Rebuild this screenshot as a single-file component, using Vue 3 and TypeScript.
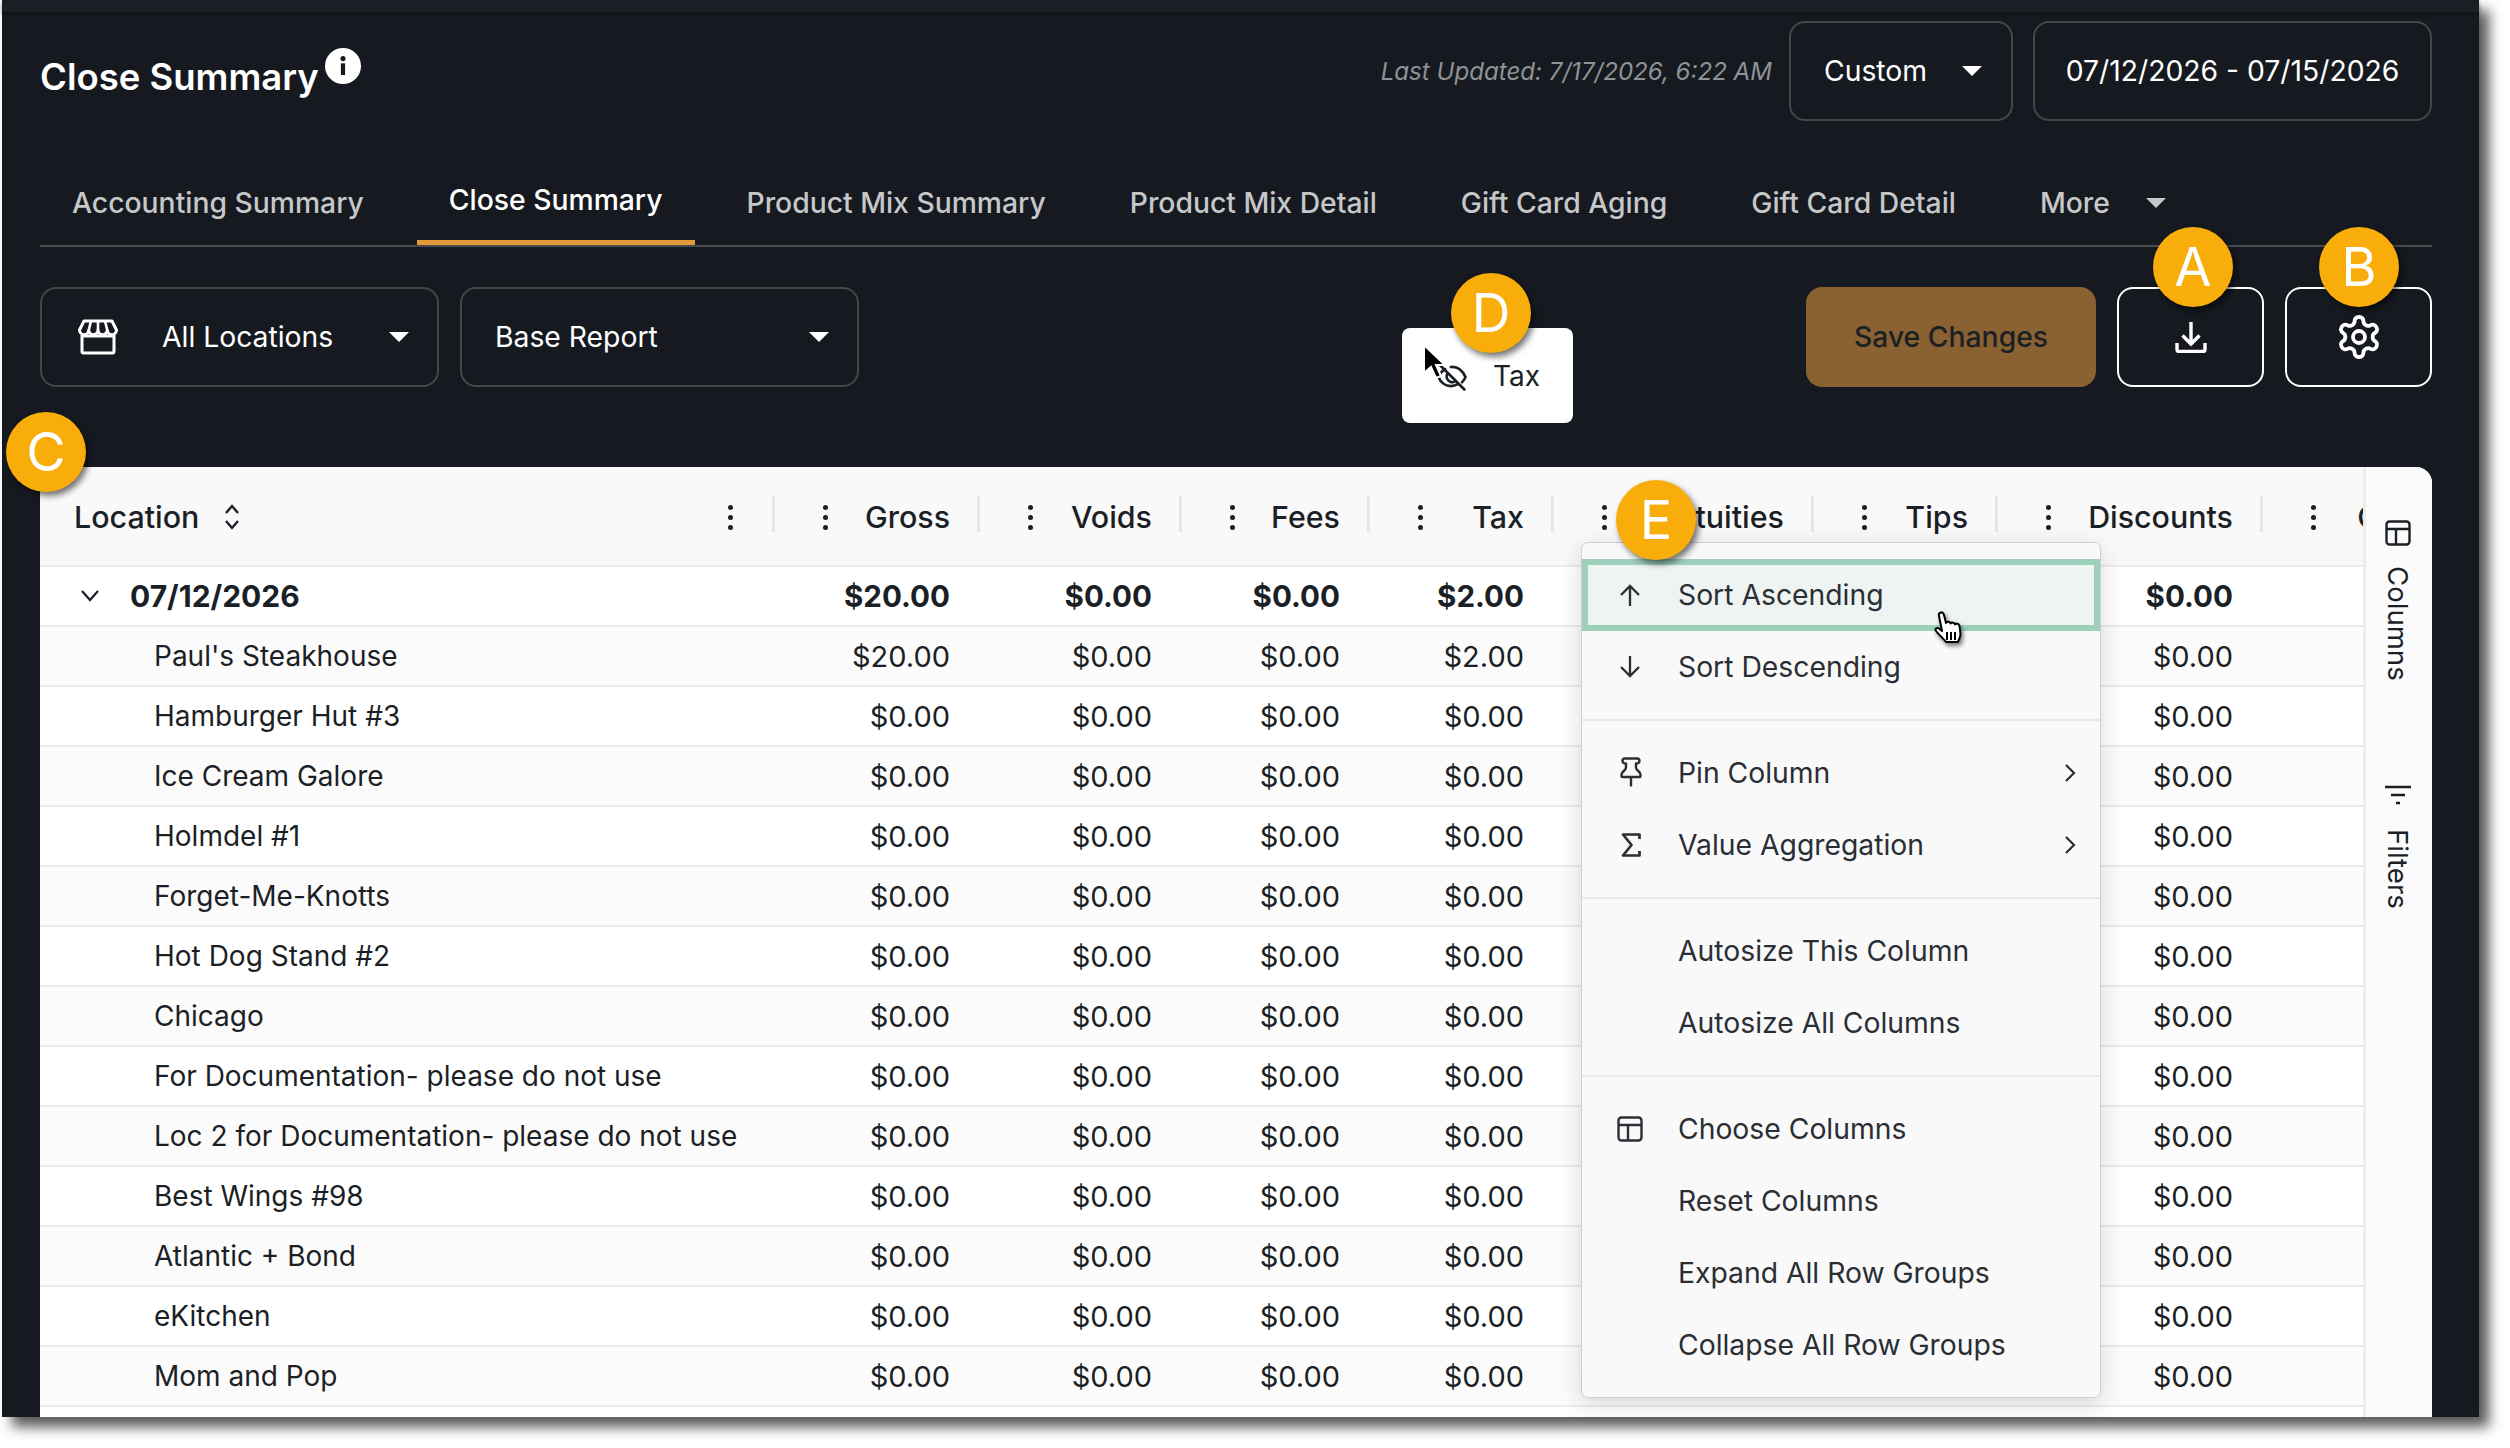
<script setup lang="ts">
// Close Summary report page: dark header, grouped table, open column menu, callout badges.
interface Row {
  name: string;
  gross?: string;
  tax?: string;
}

const tabs = [
  'Accounting Summary',
  'Close Summary',
  'Product Mix Summary',
  'Product Mix Detail',
  'Gift Card Aging',
  'Gift Card Detail',
];

const columns = ['Gross', 'Voids', 'Fees', 'Tax', 'Gratuities', 'Tips', 'Discounts', 'Comps'];

const rows: Row[] = [
  { name: "Paul's Steakhouse", gross: '$20.00', tax: '$2.00' },
  { name: 'Hamburger Hut #3' },
  { name: 'Ice Cream Galore' },
  { name: 'Holmdel #1' },
  { name: 'Forget-Me-Knotts' },
  { name: 'Hot Dog Stand #2' },
  { name: 'Chicago' },
  { name: 'For Documentation- please do not use' },
  { name: 'Loc 2 for Documentation- please do not use' },
  { name: 'Best Wings #98' },
  { name: 'Atlantic + Bond' },
  { name: 'eKitchen' },
  { name: 'Mom and Pop' },
];

// gratuities and tips sit behind the open menu, last column is past the clip
function amounts(r: { gross?: string; tax?: string }): string[] {
  const zero = '$0.00';
  return [r.gross ?? zero, zero, zero, r.tax ?? zero, '', '', zero, ''];
}
const groupAmounts = amounts({ gross: '$20.00', tax: '$2.00' });
const badges = [
  { letter: 'A', cls: 'badge-a' },
  { letter: 'B', cls: 'badge-b' },
  { letter: 'C', cls: 'badge-c' },
  { letter: 'D', cls: 'badge-d' },
  { letter: 'E', cls: 'badge-e' },
];
</script>

<template>
  <div class="page">
    <div class="panel">
      <div class="strip"></div>

      <header class="head">
        <h1 class="title">Close Summary</h1>
        <svg class="info" viewBox="0 0 34 34">
          <circle cx="17" cy="17" r="17" fill="#fff" />
          <circle cx="17" cy="10" r="2.400" fill="#161a20" />
          <rect x="15" y="14.500" width="4" height="11" fill="#161a20" />
        </svg>
        <span class="updated">Last Updated: 7/17/2026, 6:22 AM</span>
        <div class="box box-custom">Custom <i class="caret"></i></div>
        <div class="box box-date">07/12/2026 - 07/15/2026</div>
      </header>

      <nav class="tabs">
        <div v-for="t in tabs" :key="t" class="tab" :class="{ active: t === 'Close Summary' }">{{ t }}</div>
        <div class="tab">More <i class="caret caret-more"></i></div>
      </nav>

      <div class="tools">
        <div class="box box-select">
          <svg class="store" viewBox="0 0 40 36" fill="none" stroke="#fff" stroke-width="3" stroke-linejoin="round">
            <path d="M6 2h28l4.500 9a4.625 4.625 0 0 1-9.250 0 4.625 4.625 0 0 1-9.250 0 4.625 4.625 0 0 1-9.250 0 4.625 4.625 0 0 1-9.250 0z" />
            <path d="M29.250 11 27 2M20 11V2M10.750 11 13 2" stroke-width="2.600" />
            <path d="M4 16v16.500a1.500 1.500 0 0 0 1.500 1.500h29a1.500 1.500 0 0 0 1.500-1.500V16M4 17h32" />
          </svg>
          <span class="select-label">All Locations</span>
          <i class="caret"></i>
        </div>
        <div class="box box-select box-report">
          <span class="select-label">Base Report</span>
          <i class="caret"></i>
        </div>
        <button class="save">Save Changes</button>
        <button class="icon-btn">
          <svg class="dl" viewBox="0 0 32 32" fill="none" stroke="#fff" stroke-width="3.400">
            <path d="M16 1v22M7.500 14.500 16 23l8.500-8.500" />
            <path d="M2 22v6.500a2 2 0 0 0 2 2h24a2 2 0 0 0 2-2V22" />
          </svg>
        </button>
        <button class="icon-btn">
          <svg class="gear" viewBox="0 0 24 24" fill="none" stroke="#fff" stroke-width="1.900" stroke-linejoin="round">
            <path d="M12.220 2h-.44a2 2 0 0 0-2 2v.18a2 2 0 0 1-1 1.730l-.43.25a2 2 0 0 1-2 0l-.15-.08a2 2 0 0 0-2.730.73l-.22.38a2 2 0 0 0 .73 2.730l.15.1a2 2 0 0 1 1 1.720v.51a2 2 0 0 1-1 1.740l-.15.09a2 2 0 0 0-.73 2.730l.22.38a2 2 0 0 0 2.730.73l.15-.08a2 2 0 0 1 2 0l.43.25a2 2 0 0 1 1 1.730V20a2 2 0 0 0 2 2h.44a2 2 0 0 0 2-2v-.18a2 2 0 0 1 1-1.730l.43-.25a2 2 0 0 1 2 0l.15.08a2 2 0 0 0 2.730-.73l.22-.39a2 2 0 0 0-.73-2.730l-.15-.08a2 2 0 0 1-1-1.740v-.5a2 2 0 0 1 1-1.740l.15-.09a2 2 0 0 0 .73-2.730l-.22-.38a2 2 0 0 0-2.730-.73l-.15.08a2 2 0 0 1-2 0l-.43-.25a2 2 0 0 1-1-1.730V4a2 2 0 0 0-2-2z" />
            <circle cx="12" cy="12" r="3" />
          </svg>
        </button>
      </div>

      <section class="table-card">
        <div class="grid-wrap">
          <div class="row row-head">
            <div class="cell head-loc">
              <span>Location</span>
              <svg class="sort" viewBox="0 0 20 28" fill="none" stroke="#1b1f26" stroke-width="2.400">
                <path d="M4 10l6-7 6 7M4 18l6 7 6-7" />
              </svg>
              <span class="kebab kebab-end"><i></i><i></i><i></i></span>
            </div>
            <div v-for="c in columns" :key="c" class="cell head-col">
              <span class="kebab"><i></i><i></i><i></i></span>
              <span>{{ c }}</span>
            </div>
          </div>

          <div class="row row-group">
            <div class="cell cell-loc">
              <svg class="chev" viewBox="0 0 20 14" fill="none" stroke="#1b1f26" stroke-width="2.200">
                <path d="M2 2l8 9 8-9" />
              </svg>
              07/12/2026
            </div>
            <div v-for="(a, i) in groupAmounts" :key="i" class="cell cell-num">{{ a }}</div>
          </div>

          <div v-for="(r, i) in rows" :key="r.name" class="row" :class="{ alt: i % 2 === 0 }">
            <div class="cell cell-name">{{ r.name }}</div>
            <div v-for="(a, j) in amounts(r)" :key="j" class="cell cell-num">{{ a }}</div>
          </div>
        </div>

        <aside class="side">
          <div class="side-item">
            <svg class="side-icon" viewBox="0 0 26 26" fill="none" stroke="#1b1f26" stroke-width="2.400">
              <rect x="1.500" y="1.500" width="23" height="23" rx="3" />
              <path d="M1.500 9h23M11 9v15.500" />
            </svg>
            <span>Columns</span>
          </div>
          <div class="side-item side-filters">
            <svg class="side-icon" viewBox="0 0 26 20" fill="none" stroke="#1b1f26" stroke-width="2.600">
              <path d="M0 2h26M6 10h14M11 18h4" />
            </svg>
            <span>Filters</span>
          </div>
        </aside>
      </section>
    </div>

    <!-- dragged column ghost -->
    <div class="ghost">
      <svg class="ghost-eye" viewBox="0 0 32 32" fill="none" stroke="#1b1f26" stroke-width="2.400" stroke-linecap="round">
        <path d="M3 4l24 24M10 10c-3 1.500-5 4-6 7 2 5 6.500 8 11 8 2.500 0 4.500-.7 6.500-2M15 8c5-.5 10 2.500 13 9-.7 1.800-1.800 3.200-3 4.500" />
        <path d="M12 14a5 5 0 0 0 6.500 7" />
      </svg>
      <span>Tax</span>
    </div>
    <svg class="arrow-cursor" viewBox="0 0 24 36">
      <path d="M2 1v28l7-6 5 11 5-2-5-11h9z" fill="#000" stroke="#fff" stroke-width="2" />
    </svg>

    <!-- column menu -->
    <div class="menu">
      <div class="menu-item hover">
        <svg class="m-icon m-arrow" viewBox="0 0 24 24" fill="none" stroke="#2a2e35" stroke-width="2.300"><path d="M12 23V3M3 12l9-9 9 9" /></svg>
        Sort Ascending
      </div>
      <div class="menu-item">
        <svg class="m-icon m-arrow" viewBox="0 0 24 24" fill="none" stroke="#2a2e35" stroke-width="2.300"><path d="M12 1v20M3 12l9 9 9-9" /></svg>
        Sort Descending
      </div>
      <div class="menu-sep"></div>
      <div class="menu-item">
        <svg class="m-icon m-pin" viewBox="0 0 22 30" fill="none" stroke="#2a2e35" stroke-width="2.400" stroke-linejoin="round">
          <path d="M5 1.500h12a2.500 2.500 0 0 1 0 5h-1v4c0 3 4.500 4 4.500 7v1.500a1 1 0 0 1-1 1H2.500a1 1 0 0 1-1-1v-1.500c0-3 4.500-4 4.500-7v-4H5a2.500 2.500 0 0 1 0-5zM11 21v8.500" />
        </svg>
        Pin Column
        <svg class="m-next" viewBox="0 0 12 20" fill="none" stroke="#2a2e35" stroke-width="2.200"><path d="M2 2l8 8-8 8" /></svg>
      </div>
      <div class="menu-item">
        <svg class="m-icon m-sigma" viewBox="0 0 20 24" fill="none" stroke="#2a2e35" stroke-width="2.700" stroke-linejoin="round"><path d="M18.500 6V1.500H2l8.500 10.500L2 22.500h16.500V18" /></svg>
        Value Aggregation
        <svg class="m-next" viewBox="0 0 12 20" fill="none" stroke="#2a2e35" stroke-width="2.200"><path d="M2 2l8 8-8 8" /></svg>
      </div>
      <div class="menu-sep"></div>
      <div class="menu-item">Autosize This Column</div>
      <div class="menu-item">Autosize All Columns</div>
      <div class="menu-sep"></div>
      <div class="menu-item">
        <svg class="m-icon m-cols" viewBox="0 0 26 26" fill="none" stroke="#2a2e35" stroke-width="2.400">
          <rect x="1.500" y="1.500" width="23" height="23" rx="3" />
          <path d="M1.500 9h23M11 9v15.500" />
        </svg>
        Choose Columns
      </div>
      <div class="menu-item">Reset Columns</div>
      <div class="menu-item">Expand All Row Groups</div>
      <div class="menu-item">Collapse All Row Groups</div>
    </div>

    <svg class="hand-cursor" viewBox="0 0 30 34">
      <path d="M6 2c2-1.500 3.500 0 4 2l2 8c1-2 4-1.500 4.500.5 1-1.500 4-1 4.500 1 1-1.500 4-1 4.500 1.500l1 8c0 3-1.500 5-2.500 8H12c-2-3-7-7-10-11-1.500-2 .5-4 3-2.500l3 2.500L5 5c-.5-1.500 0-2.500 1-3z" fill="#fff" stroke="#000" stroke-width="2" stroke-linejoin="round" />
      <path d="M13 21v8M17 21v8M21 21v8" stroke="#000" stroke-width="2" />
    </svg>

    <div v-for="b in badges" :key="b.letter" class="badge" :class="b.cls">{{ b.letter }}</div>
  </div>
</template>

<style>
html,
body {
  margin: 0;
  background: #fff;
}
</style>

<style scoped>
.page {
  position: relative;
  width: 2510px;
  height: 1448px;
  overflow: hidden;
  font-family: Inter, 'Liberation Sans', sans-serif;
  font-size: 28.3px;
  color: #1b1f26;
}
.panel {
  margin-left: 2px;
  width: 2477px;
  height: 1417px;
  background: #161a20;
  box-shadow: 10px 10px 12px rgba(0, 0, 0, 0.65);
  padding: 0 47px 0 38px;
  box-sizing: border-box;
  display: flex;
  flex-direction: column;
}
.strip {
  height: 12px;
  margin: 0 -47px 0 -38px;
  background: #1a1e25;
  box-shadow: 0 2px 4px rgba(0, 0, 0, 0.4);
  flex: none;
}
.head {
  margin-top: 9px;
  height: 100px;
  display: flex;
  align-items: center;
  color: #fff;
  flex: none;
}
.title {
  font-size: 36.5px;
  font-weight: 600;
  margin: 12px 0 0;
}
.info {
  width: 36px;
  height: 36px;
  margin: -10px 0 0 6px;
}
.updated {
  margin-left: auto;
  font-size: 24.1px;
  font-style: italic;
  color: #8f9297;
  margin-right: 17px;
}
.box {
  box-sizing: border-box;
  height: 100px;
  border: 2px solid #44474c;
  border-radius: 16px;
  display: flex;
  align-items: center;
  color: #fff;
}
.box-custom {
  width: 224px;
  padding-left: 33px;
  justify-content: flex-start;
  gap: 35px;
}
.box-date {
  width: 399px;
  margin-left: 20px;
  justify-content: center;
}
.caret {
  width: 0;
  height: 0;
  border-left: 10px solid transparent;
  border-right: 10px solid transparent;
  border-top: 10px solid currentColor;
  display: inline-block;
}
.tabs {
  margin-top: 30px;
  height: 96px;
  box-sizing: border-box;
  border-bottom: 2px solid #484b50;
  display: flex;
  gap: 20px;
  flex: none;
}
.tab {
  padding: 9px 32px 0;
  height: 94px;
  box-sizing: border-box;
  display: flex;
  align-items: center;
  font-weight: 500;
  color: #c6c7c9;
}
.tab:first-child {
  margin-right: 1px;
}
.tab.active {
  color: #fff;
  border-bottom: 5px solid #e3983a;
}
.caret-more {
  margin-left: 36px;
  color: #c6c7c9;
}
.tools {
  margin-top: 40px;
  height: 100px;
  display: flex;
  gap: 21px;
  flex: none;
}
.box-select {
  width: 399px;
  padding: 0 28px 0 33px;
}
.store {
  width: 40px;
  height: 36px;
  flex: none;
  margin: 0 44px 0 3px;
}
.select-label {
  flex: 1;
}
.save {
  margin-left: auto;
  width: 290px;
  height: 100px;
  border: 0;
  border-radius: 16px;
  background: #8a6130;
  color: #1b1f26;
  font: 500 28.3px Inter, sans-serif;
}
.icon-btn {
  width: 147px;
  height: 100px;
  background: transparent;
  border: 2px solid #fff;
  border-radius: 16px;
  display: flex;
  align-items: center;
  justify-content: center;
  padding: 0;
}
.dl {
  width: 32px;
  height: 32px;
}
.gear {
  width: 48px;
  height: 48px;
}
.table-card {
  margin-top: 80px;
  flex: 1;
  min-height: 0;
  background: #fff;
  border-radius: 16px 16px 0 0;
  overflow: hidden;
  display: flex;
}
.grid-wrap {
  width: 2323px;
  flex: none;
  overflow: hidden;
}
.row {
  display: grid;
  grid-template-columns: 735px 205px 202px 188px 184px 260px 184px 265px 227px;
  width: 2450px;
  height: 60px;
  box-sizing: border-box;
  border-bottom: 2px solid #ececec;
  background: #fff;
  align-items: center;
  font-size: 28px;
}
.row.alt {
  background: #fbfbfb;
}
.row-head {
  height: 100px;
  background: #f9f9f9;
  align-items: start;
  font-size: 30.4px;
  font-weight: 500;
}
.row-group {
  font-size: 29.6px;
  font-weight: 700;
}
.cell {
  white-space: nowrap;
}
.cell-loc {
  font-size: 30px;
}
.head-loc,
.head-col {
  height: 42px;
  margin-top: 29px;
  display: flex;
  align-items: center;
  position: relative;
}
.head-loc {
  padding-left: 34px;
}
.sort {
  width: 20px;
  height: 28px;
  margin-left: 23px;
}
.kebab {
  display: inline-flex;
  flex-direction: column;
  gap: 5px;
  flex: none;
}
.kebab i {
  width: 5px;
  height: 5px;
  border-radius: 50%;
  background: #1b1f26;
  display: block;
}
.kebab-end {
  margin-left: auto;
  margin-right: 42px;
}
.head-col {
  justify-content: space-between;
  padding: 0 30px 0 48px;
}
.head-loc::after,
.head-col::after {
  content: '';
  position: absolute;
  right: 0;
  top: 0;
  width: 3px;
  height: 36px;
  background: #e6e6e6;
}
.cell-num {
  text-align: right;
  padding-right: 30px;
}
.row:not(.row-group):not(.row-head) .cell-num {
  font-size: 29px;
}
.cell-name {
  padding-left: 114px;
}
.cell-loc {
  display: flex;
  align-items: center;
  padding-left: 40px;
}
.chev {
  width: 20px;
  height: 14px;
  margin-right: 30px;
}
.side {
  flex: 1;
  background: #fbfbfb;
  border-left: 3px solid #ececec;
  display: flex;
  flex-direction: column;
  align-items: center;
  padding: 53px 2px 0 0;
}
.side-item {
  display: flex;
  flex-direction: column;
  align-items: center;
  gap: 20px;
}
.side-item span {
  writing-mode: vertical-rl;
  font-size: 27.6px;
}
.side-icon {
  width: 26px;
}
.side-filters {
  margin-top: 104px;
  gap: 24px;
}
.ghost {
  position: absolute;
  left: 1402px;
  top: 328px;
  width: 171px;
  height: 95px;
  box-sizing: border-box;
  background: #fff;
  border-radius: 8px;
  padding: 30px 0 0 91px;
  font-size: 28px;
  line-height: 36px;
}
.ghost-eye {
  position: absolute;
  left: 32px;
  top: 30px;
  width: 36px;
  height: 36px;
}
.arrow-cursor {
  position: absolute;
  left: 1422px;
  top: 344px;
  width: 24px;
  height: 36px;
}
.menu {
  position: absolute;
  left: 1581px;
  top: 542px;
  width: 520px;
  height: 856px;
  box-sizing: border-box;
  padding: 16px 0;
  background: #f9f9f9;
  border: 1px solid #cfcfcf;
  border-radius: 7px;
  box-shadow: 0 6px 24px rgba(0, 0, 0, 0.15);
  color: #2a2e35;
}
.menu-item {
  position: relative;
  height: 72px;
  display: flex;
  align-items: center;
  padding-left: 96px;
  box-sizing: border-box;
}
.menu-item.hover {
  background: #eef4f1;
  border: 6px solid #9dd0bb;
  padding-left: 90px;
}
.m-icon {
  position: absolute;
}
.m-arrow {
  left: 36px;
  top: 24px;
  width: 24px;
  height: 24px;
}
.hover .m-arrow {
  left: 30px;
  top: 18px;
}
.m-pin {
  left: 38px;
  top: 20px;
  width: 22px;
  height: 30px;
}
.m-sigma {
  left: 39px;
  top: 24px;
  width: 20px;
  height: 24px;
}
.m-cols {
  left: 35px;
  top: 23px;
  width: 26px;
  height: 26px;
}
.m-next {
  position: absolute;
  right: 24px;
  top: 26px;
  width: 12px;
  height: 20px;
}
.menu-sep {
  height: 2px;
  background: #e8e8e8;
  margin: 16px 0;
}
.hand-cursor {
  position: absolute;
  left: 1934px;
  top: 611px;
  width: 30px;
  height: 34px;
  filter: drop-shadow(2px 3px 2px rgba(0, 0, 0, 0.5));
}
.badge {
  position: absolute;
  width: 80px;
  height: 80px;
  margin: -40px 0 0 -40px;
  border-radius: 50%;
  background: #f9ad0a;
  color: #fff;
  font-size: 54px;
  line-height: 80px;
  text-align: center;
  box-shadow: 3px 4px 6px rgba(0, 0, 0, 0.55);
}
.badge-a {
  left: 2193px;
  top: 267px;
}
.badge-b {
  left: 2359px;
  top: 267px;
}
.badge-c {
  left: 46px;
  top: 452px;
}
.badge-d {
  left: 1491px;
  top: 313px;
}
.badge-e {
  left: 1656px;
  top: 520px;
}
</style>
